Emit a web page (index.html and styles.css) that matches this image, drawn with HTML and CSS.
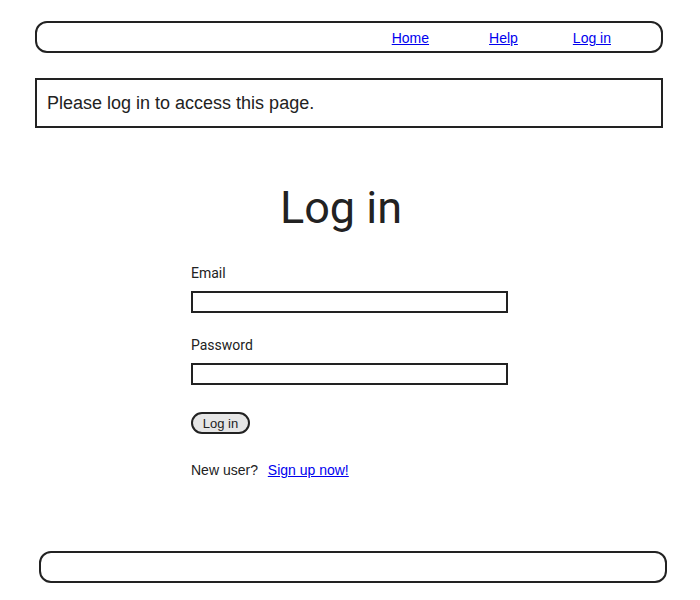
FILE: index.html
```html
<!DOCTYPE html>
<html>
<head>
<meta charset="utf-8">
<link rel="stylesheet" href="styles.css">
</head>
<body>
<header class="site-header">
  <nav class="nav">
    <a href="#" class="nav-link">Home</a>
    <a href="#" class="nav-link nav-help">Help</a>
    <a href="#" class="nav-link nav-login">Log in</a>
  </nav>
</header>
<div class="flash">Please log in to access this page.</div>
<main class="main">
  <h1 class="title">Log in</h1>
  <form class="form">
    <label class="label" for="email">Email</label>
    <input class="input" id="email" type="email">
    <label class="label label-pw" for="pw">Password</label>
    <input class="input" id="pw" type="password">
    <button class="btn" type="button">Log in</button>
    <p class="signup">New user? <a href="#" class="signup-link">Sign up now!</a></p>
  </form>
</main>
<footer class="site-footer"></footer>
</body>
</html>
```
FILE: styles.css
```css
html, body {
  margin: 0;
  padding: 0;
  background: #fff;
}
body {
  font-family: "Liberation Sans", Arial, sans-serif;
  color: #222;
  padding-top: 21px;
}
.site-header {
  margin: 0 37px 0 35px;
  height: 32px;
  box-sizing: border-box;
  border: 2px solid #222;
  border-radius: 12px;
  display: flex;
  align-items: center;
  justify-content: flex-end;
  padding-right: 50px;
}
.nav {
  display: flex;
  font-size: 14px;
  line-height: 16px;
  padding-top: 2px;
}
.nav-link {
  color: #0000ee;
}
.nav-help { margin-left: 60px; }
.nav-login { margin-left: 55px; }
.flash {
  margin: 25px 37px 0 35px;
  height: 50px;
  box-sizing: border-box;
  border: 2px solid #222;
  padding: 0 10px;
  font-size: 18px;
  display: flex;
  align-items: center;
}
.main {
  display: flex;
  flex-direction: column;
  align-items: center;
}
.title {
  margin: 54px 18px 0 0;
  font-family: Roboto, "Liberation Sans", sans-serif;
  font-weight: 400;
  font-size: 45px;
  line-height: 52px;
}
.form {
  width: 317px;
  margin: 31px 1px 0 0;
  display: flex;
  flex-direction: column;
  align-items: flex-start;
}
.label {
  font-family: Roboto, "Liberation Sans", sans-serif;
  font-size: 14px;
  line-height: 16px;
}
.label-pw { margin-top: 24px; }
.input {
  margin: 10px 0 0 0;
  width: 317px;
  height: 22px;
  box-sizing: border-box;
  border: 2px solid #222;
  padding: 0 4px;
  outline: none;
}
.btn {
  margin-top: 27px;
  width: 59px;
  height: 22px;
  box-sizing: border-box;
  border: 2px solid #222;
  border-radius: 11px;
  background: #e6e6e6;
  font-family: "Liberation Sans", Arial, sans-serif;
  font-size: 13px;
  color: #222;
  padding: 0;
}
.signup {
  margin: 28px 0 0 0;
  font-size: 14px;
  line-height: 16px;
}
.signup-link {
  color: #0000ee;
  margin-left: 6px;
}
.site-footer {
  margin: 73px 33px 0 39px;
  height: 32px;
  box-sizing: border-box;
  border: 2px solid #222;
  border-radius: 12px;
}
```
